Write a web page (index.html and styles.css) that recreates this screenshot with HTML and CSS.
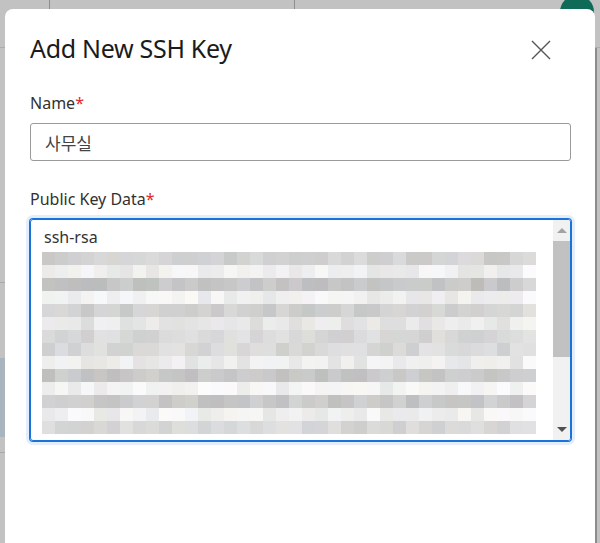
FILE: index.html
```html
<!DOCTYPE html>
<html lang="ko">
<head>
    <meta charset="UTF-8">
    <meta name="viewport" content="width=device-width, initial-scale=1.0">
    <title>SSH Keys</title>
    <link rel="stylesheet" href="styles.css">
</head>
<body>
    <div class="page">
        <div class="page-header">
            <div class="col col-first"></div>
            <div class="col col-second"></div>
            <div class="avatar"></div>
        </div>
        <div class="page-body">
            <div class="side">
                <div class="side-item side-top"></div>
                <div class="side-item side-mid"></div>
                <div class="side-item side-active"></div>
                <div class="side-item side-last"></div>
            </div>
            <div class="main"></div>
        </div>
    </div>

    <div class="modal">
        <div class="modal-header">
            <h2>Add New SSH Key</h2>
            <button class="close-button" aria-label="Close">
                <svg width="20" height="20" viewBox="0 0 20 20">
                    <path d="M1 1 L19 19 M19 1 L1 19" stroke="#555" stroke-width="1.4" fill="none"/>
                </svg>
            </button>
        </div>

        <label class="field-label">Name<span class="required">*</span></label>
        <div class="text-input">사무실</div>

        <label class="field-label field-label-key">Public Key Data<span class="required">*</span></label>
        <div class="key-box">
            <div class="key-content">
                <div class="key-prefix">ssh-rsa</div>
                <div class="key-blur" id="keyBlur"></div>
            </div>
            <div class="scrollbar">
                <div class="scroll-arrow scroll-up"></div>
                <div class="scroll-thumb"></div>
                <div class="scroll-space"></div>
                <div class="scroll-arrow scroll-down"></div>
            </div>
        </div>
    </div>

    <script>
        // pixelated key data (blurred in the screenshot)
        const rowTones = [210, 238, 196, 240, 207, 230, 217, 217, 235, 200, 242, 201, 240, 216];
        const cols = 38;
        let seed = 7;
        function rand() {
            seed = (seed * 16807) % 2147483647;
            return (seed - 1) / 2147483646;
        }
        const blur = document.getElementById('keyBlur');
        rowTones.forEach(tone => {
            for (let i = 0; i < cols; i++) {
                const cell = document.createElement('div');
                let v = tone + Math.round((rand() - 0.5) * 20);
                if (i === cols - 1) v = Math.min(250, v + 14);
                v = Math.max(160, Math.min(255, v));
                const r = v + Math.round((rand() - 0.5) * 4);
                const b = v + Math.round((rand() - 0.5) * 6);
                cell.style.background = `rgb(${r}, ${v}, ${b})`;
                blur.appendChild(cell);
            }
        });
    </script>
</body>
</html>
```

FILE: styles.css
```css
* {
    margin: 0;
    padding: 0;
    box-sizing: border-box;
}

body {
    height: 543px;
    overflow: hidden;
    background: #c2c2c2;
    font-family: "Segoe UI", "Noto Sans", "Noto Sans CJK KR", sans-serif;
    color: #323130;
}

/* dimmed page behind the dialog */
.page-header {
    display: flex;
    height: 48px;
    border-block-end: 1px solid #acacac;
}

.col {
    border-inline-end: 1px solid #8e8e8e;
}

.col-first {
    inline-size: 50px;
}

.col-second {
    inline-size: 245px;
}

.avatar {
    inline-size: 34px;
    block-size: 34px;
    border-radius: 50%;
    background: #0f6b58;
    margin-inline-start: auto;
    margin-inline-end: 6px;
    margin-block-start: -5px;
}

.page-body {
    display: flex;
    block-size: 495px;
}

.side {
    inline-size: 200px;
}

.side-item {
    border-block-end: 1px solid #a9a9a9;
}

.side-top {
    block-size: 235px;
}

.side-mid {
    block-size: 75px;
    border-block-end: none;
}

.side-active {
    block-size: 79px;
    background: #aab4be;
    border-block-end: none;
}

.side-last {
    block-size: 16px;
}

.main {
    flex: 1;
    border-inline-end: 2px solid #8c8c8c;
    margin-inline-end: 3px;
}

/* dialog */
.modal {
    position: fixed;
    inset-inline-start: 5px;
    inset-block-start: 9px;
    inline-size: 590px;
    block-size: 560px;
    background: #fff;
    border-radius: 8px;
    padding: 21px 24px 0 25px;
}

.modal-header {
    display: flex;
    align-items: center;
    justify-content: space-between;
    block-size: 40px;
    margin-block-end: 22px;
}

.modal-header h2 {
    font-size: 25px;
    font-weight: 400;
    color: #1b1b1b;
    line-height: 32px;
    margin-block-start: -4px;
    letter-spacing: -0.3px;
}

.close-button {
    display: flex;
    background: none;
    border: none;
    margin-inline-end: 20px;
    cursor: pointer;
}

.field-label {
    display: block;
    font-size: 16px;
    line-height: 22px;
    color: #323130;
}

.required {
    color: #e3262e;
}

.text-input {
    block-size: 38px;
    margin-block-start: 9px;
    border: 1px solid #9a9a9a;
    border-radius: 3px;
    padding: 0 14px;
    display: flex;
    align-items: center;
    font-family: "Noto Sans CJK KR", sans-serif;
    font-size: 17px;
    color: #444;
}

.field-label-key {
    margin-block-start: 27px;
}

.key-box {
    display: flex;
    block-size: 222px;
    margin-block-start: 9px;
    border: 1px solid #1a73d9;
    border-radius: 3px;
    box-shadow: 0 0 0 1px #1a73d9, 0 0 0 4px rgba(26, 115, 217, 0.12);
    overflow: hidden;
}

.key-content {
    flex: 1;
    padding: 6px 0 0 11px;
    overflow: hidden;
}

.key-prefix {
    font-size: 16px;
    line-height: 22px;
    padding-inline-start: 2px;
    margin-block-end: 4px;
    color: #333;
}

.key-blur {
    display: grid;
    grid-template-columns: repeat(38, 13px);
    grid-auto-rows: 13px;
}

.scrollbar {
    display: flex;
    flex-direction: column;
    inline-size: 17px;
    background: #f1f1f1;
}

.scroll-arrow {
    block-size: 21px;
    display: flex;
    align-items: center;
    justify-content: center;
}

.scroll-up::before,
.scroll-down::before {
    content: "";
    border-inline: 5px solid transparent;
}

.scroll-up::before {
    border-block-end: 5px solid #a3a3a3;
}

.scroll-down::before {
    border-block-start: 5px solid #505050;
}

.scroll-thumb {
    block-size: 116px;
    background: #c1c1c1;
}

.scroll-space {
    flex: 1;
}
```
